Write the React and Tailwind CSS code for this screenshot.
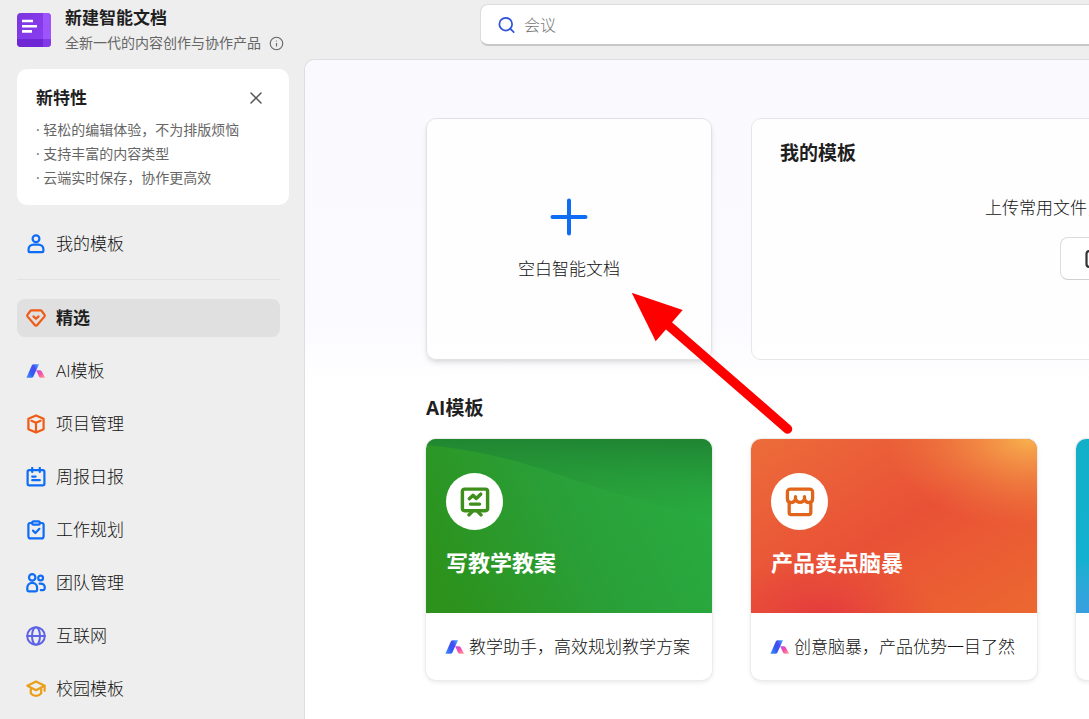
import { Search, X, Info } from 'lucide-react';

const FONT = "font-['Open_Sans','Noto_Sans_CJK_SC',sans-serif]";

function Stroke({ color, size = 20, width = 2.2, children }) {
  return (
    <svg className="shrink-0" width={size} height={size} viewBox="0 0 20 20" fill="none" stroke={color} strokeWidth={width} strokeLinecap="round" strokeLinejoin="round" aria-hidden="true">
      {children}
    </svg>
  );
}

function AiMark({ id }) {
  return (
    <svg className="shrink-0" width="20" height="20" viewBox="0 0 20 20" aria-hidden="true">
      <defs>
        <linearGradient id={`${id}-a`} x1="0" y1="0.8" x2="1" y2="0.2">
          <stop offset="0" stopColor="#3d8bff" />
          <stop offset="0.4" stopColor="#3457f2" />
          <stop offset="0.7" stopColor="#4a4cf0" />
          <stop offset="1" stopColor="#3fa0ff" />
        </linearGradient>
        <linearGradient id={`${id}-b`} x1="0" y1="0" x2="1" y2="1">
          <stop offset="0" stopColor="#b44df0" />
          <stop offset="0.5" stopColor="#f84fa8" />
          <stop offset="1" stopColor="#ffa9a0" />
        </linearGradient>
      </defs>
      <path d="M10.200 9.200H13.800Q15.200 9.200 15.800 10.400L19.200 16.800H15Q13.600 16.800 13 15.600Z" fill={`url(#${id}-b)`} />
      <path d="M5.800 4.400Q6.400 3.200 7.800 3.200H13L7.400 15.600Q6.800 16.800 5.400 16.800H.4Z" fill={`url(#${id}-a)`} />
    </svg>
  );
}

function DocLogo() {
  return (
    <svg className="shrink-0" width="34" height="34" viewBox="0 0 34 34" aria-hidden="true">
      <defs>
        <clipPath id="doc-clip"><rect width="34" height="34" rx="4" /></clipPath>
        <linearGradient id="doc-page" x1="0" y1="0" x2="1" y2="1">
          <stop offset="0" stopColor="#7a35de" />
          <stop offset="1" stopColor="#9040f4" />
        </linearGradient>
      </defs>
      <g clipPath="url(#doc-clip)">
        <rect width="34" height="34" fill="url(#doc-page)" />
        <rect x="26" width="8" height="34" fill="#9d55fb" />
        <rect y="26" width="26" height="8" fill="#6f26d4" />
        <path d="M26 26h8v8h-8z" fill="#8438e8" />
      </g>
      <path d="M5 8h11M5 13.200h15M5 18.400h10" stroke="#fff" strokeWidth="2.600" />
    </svg>
  );
}

const navItems = [
  {
    label: '精选',
    active: true,
    icon: (
      <Stroke color="#f05a14">
        <path d="M5.600 2.400h8.800a1.600 1.600 0 0 1 1.300.6l2.700 3.600a1.600 1.600 0 0 1 0 2L11.200 17a1.600 1.600 0 0 1-2.400 0L1.600 8.600a1.600 1.600 0 0 1 0-2L4.300 3a1.600 1.600 0 0 1 1.300-.6Z" />
        <path d="M7.400 8.400 10 10.800l2.600-2.400" />
      </Stroke>
    ),
  },
  { label: 'AI模板', icon: <AiMark id="nav" /> },
  {
    label: '项目管理',
    icon: (
      <Stroke color="#f05a14">
        <path d="M10 1.600 17.600 4.800v10.400L10 18.400 2.400 15.200V4.800Z" />
        <path d="M5.400 6.800 10 8.800l4.600-2M10 8.800v9.200" />
      </Stroke>
    ),
  },
  {
    label: '周报日报',
    icon: (
      <Stroke color="#0f6cf5">
        <rect x="1.600" y="3.200" width="16.800" height="15.200" rx="1.600" />
        <path d="M6.200 1v4M13.800 1v4M6.200 9.600h3.400M6.200 13.200h7.600" />
      </Stroke>
    ),
  },
  {
    label: '工作规划',
    icon: (
      <Stroke color="#0f6cf5">
        <path d="M6 3H4.200A1.800 1.800 0 0 0 2.400 4.800v11.800a1.800 1.800 0 0 0 1.800 1.800h11.600a1.800 1.800 0 0 0 1.800-1.800V4.800A1.800 1.800 0 0 0 15.800 3H14" />
        <rect x="6.200" y="1.400" width="7.600" height="3.200" rx="1.400" />
        <path d="m7 10.600 2.400 2.400 4-4.200" />
      </Stroke>
    ),
  },
  {
    label: '团队管理',
    icon: (
      <Stroke color="#0f6cf5">
        <circle cx="6.200" cy="4.400" r="3.200" />
        <circle cx="14.600" cy="5" r="2.400" />
        <path d="M1.300 17v-2.200a4.900 4.900 0 0 1 9.800 0V17a1.300 1.300 0 0 1-1.300 1.300H2.600A1.300 1.300 0 0 1 1.300 17Z" />
        <path d="M13.600 10.600c3.200-.4 5.200 1.400 5.200 4 0 1.800-.6 2.600-2 2.600h-2" />
      </Stroke>
    ),
  },
  {
    label: '互联网',
    icon: (
      <Stroke color="#5f63e6" width={2}>
        <circle cx="10" cy="10" r="8.800" />
        <ellipse cx="10" cy="10" rx="4" ry="8.800" />
        <path d="M1.200 10h17.600" />
      </Stroke>
    ),
  },
  {
    label: '校园模板',
    icon: (
      <Stroke color="#e99f1a">
        <path d="M10 2.400 1.400 6.800 10 11.200 18.600 6.800Z" />
        <path d="M4.800 10v4.400c2.600 3.400 7.800 3.400 10.400 0V10M18.600 7.200v4.600" />
      </Stroke>
    ),
  },
];

const aiCards = [
  {
    id: 'teach',
    title: '写教学教案',
    desc: '教学助手，高效规划教学方案',
    icon: (
      <Stroke color="#3f8f1c" size={30} width={2.3}>
        <rect x="1.600" y="1.400" width="16.800" height="14.400" rx="1.400" />
        <path d="M6.200 7.800 8.600 5.600l2.200 2 3-2.800M7 11.400h6" />
        <path d="M6 18.600 8 16.600M14 18.600l-2-2" />
      </Stroke>
    ),
  },
  {
    id: 'product',
    title: '产品卖点脑暴',
    desc: '创意脑暴，产品优势一目了然',
    icon: (
      <Stroke color="#e0641a" size={30} width={2.2}>
        <path d="M3.600 1.400h12.800a2 2 0 0 1 2 2v4.200c0 3.200-3.800 3.800-5.400.8-1.200 2.400-4.800 2.400-6 0-1.600 3-5.400 2.400-5.400-.8V3.400a2 2 0 0 1 2-2Z" />
        <path d="M7 6.400v2M13 6.400v2M2.800 10.400v6.800a1.200 1.200 0 0 0 1.200 1.200h12a1.200 1.200 0 0 0 1.200-1.200v-6.800" />
      </Stroke>
    ),
  },
  { id: 'next' },
];

const covers = {
  teach: (
    <svg className="absolute inset-0 h-full w-full" viewBox="0 0 286 174" preserveAspectRatio="none" aria-hidden="true">
      <defs>
        <linearGradient id="cover-green" x1="0" y1="0.65" x2="1" y2="0.35">
          <stop offset="0" stopColor="#2c921c" />
          <stop offset="0.5" stopColor="#2a9f38" />
          <stop offset="1" stopColor="#28ac40" />
        </linearGradient>
        <linearGradient id="cover-green-top" x1="0.5" y1="0" x2="0.42" y2="1">
          <stop offset="0" stopColor="#1f8432" stopOpacity="0.95" />
          <stop offset="1" stopColor="#28a03c" stopOpacity="0" />
        </linearGradient>
      </defs>
      <rect width="286" height="174" fill="url(#cover-green)" />
      <path d="M0 0H286V80Q215 62 150 42Q70 12 0 6Z" fill="url(#cover-green-top)" />
    </svg>
  ),
  product: (
    <svg className="absolute inset-0 h-full w-full" viewBox="0 0 286 174" preserveAspectRatio="none" aria-hidden="true">
      <defs>
        <linearGradient id="cover-orange" x1="0" y1="0" x2="1" y2="1">
          <stop offset="0" stopColor="#ec6c3a" />
          <stop offset="0.5" stopColor="#e95136" />
          <stop offset="1" stopColor="#ec6830" />
        </linearGradient>
        <radialGradient id="cover-yellow" cx="0.97" cy="0" r="0.5">
          <stop offset="0" stopColor="#f8b04e" />
          <stop offset="1" stopColor="#f08840" stopOpacity="0" />
        </radialGradient>
        <radialGradient id="cover-red" cx="0.25" cy="1.05" r="0.4">
          <stop offset="0" stopColor="#e4373f" />
          <stop offset="1" stopColor="#e4453c" stopOpacity="0" />
        </radialGradient>
      </defs>
      <rect width="286" height="174" fill="url(#cover-orange)" />
      <rect width="286" height="174" fill="url(#cover-yellow)" />
      <rect width="286" height="174" fill="url(#cover-red)" />
    </svg>
  ),
  next: <div className="absolute inset-0 bg-linear-to-b from-[#12b0c8] via-[#14b0d0] via-70% to-[#3a9fe0]" />,
};

function NavItem({ label, icon, active }) {
  return (
    <a
      href="#"
      className={`flex h-[38px] items-center gap-[10px] rounded-lg pl-[9px] text-[17px] ${active ? 'bg-[#e0e0e0] font-bold text-[#1f1f1f]' : 'font-light text-[#111]'}`}
    >
      {icon}
      <span>{label}</span>
    </a>
  );
}

function Sidebar() {
  return (
    <aside className="w-[304px] shrink-0 pt-[7px] pr-[15px] pl-[17px]">
      <div className="flex items-center gap-[14px]">
        <DocLogo />
        <div className="flex flex-col gap-1 whitespace-nowrap">
          <h1 className="text-[17px] leading-[22px] font-bold text-[#1f1f1f]">新建智能文档</h1>
          <p className="flex items-center gap-2 text-sm leading-5 text-[#666]">
            全新一代的内容创作与协作产品
            <Info size={15} strokeWidth={1.8} />
          </p>
        </div>
      </div>

      <section className="mt-4 rounded-[10px] bg-white px-[19px] pt-[17px] pb-[15px]">
        <div className="flex h-6 items-center justify-between">
          <h2 className="text-[17px] font-bold text-[#1f1f1f]">新特性</h2>
          <button aria-label="关闭" className="flex h-6 items-center px-1 text-[#555]">
            <X size={20} strokeWidth={1.8} />
          </button>
        </div>
        <ul className="mt-2 text-sm leading-6 text-[#666]">
          <li>· 轻松的编辑体验，不为排版烦恼</li>
          <li>· 支持丰富的内容类型</li>
          <li>· 云端实时保存，协作更高效</li>
        </ul>
      </section>

      <nav className="mt-5 pr-[9px]">
        <NavItem
          label="我的模板"
          icon={
            <Stroke color="#0f6cf5">
              <circle cx="10" cy="4.800" r="3.400" />
              <path d="M2.600 17v-1.800c0-2.800 2.400-4.600 5-4.600h4.800c2.600 0 5 1.800 5 4.600V17a1.200 1.200 0 0 1-1.200 1.200H3.800A1.200 1.200 0 0 1 2.600 17Z" />
            </Stroke>
          }
        />
        <hr className="mt-4 mb-[19px] border-[#e2e2e2]" />
        <div className="flex flex-col gap-[15px]">
          {navItems.map(item => <NavItem key={item.label} {...item} />)}
        </div>
      </nav>
    </aside>
  );
}

function AiCard({ id, title, desc, icon }) {
  return (
    <article className="overflow-hidden rounded-[10px] bg-white shadow-[0_0_0_1px_#ececec,0_2px_5px_rgba(0,0,0,0.1)]">
      <div className="relative h-[174px]">
        {covers[id]}
        {title && (
          <div className="relative px-5 pt-[34px]">
            <div className="flex h-[57px] w-[57px] items-center justify-center rounded-full bg-white">{icon}</div>
            <h3 className="mt-4 text-[22px] leading-8 font-bold text-white">{title}</h3>
          </div>
        )}
      </div>
      <div className="flex h-[67px] items-center gap-1 pl-[19px] text-[17px] font-light whitespace-nowrap text-[#111]">
        {desc && <AiMark id={id} />}
        {desc}
      </div>
    </article>
  );
}

export default function App() {
  return (
    <div className={`relative flex h-screen overflow-hidden bg-[#eee] ${FONT}`}>
      <Sidebar />

      <div className="flex min-w-0 flex-1 flex-col">
        <header className="flex h-[59px] shrink-0 pt-1 pl-[176px]">
          <label className="flex h-[42px] flex-1 items-center gap-2 rounded-l-lg border border-r-0 border-b-2 border-[#dcdcdc] border-b-[#c8c8c8] bg-white pl-4">
            <Search size={20} color="#2f54d8" strokeWidth={2.2} />
            <input aria-label="搜索" placeholder="会议" className="w-full min-w-0 bg-transparent text-base font-light outline-none placeholder:text-[#777]" />
          </label>
        </header>

        <main className="flex-1 overflow-hidden rounded-tl-[10px] border-t border-l border-[#dedee2] bg-linear-to-b from-[#f9f9fe] via-[#fbfbff] via-40% to-white to-50% pt-[58px] pl-[121px]">
          <div className="grid auto-cols-[286px] grid-flow-col gap-[39px]">
            <button className="flex h-[242px] flex-col items-center rounded-[10px] border border-[#e2e2e6] bg-white/80 pt-[79px] shadow-md">
              <svg width="38" height="38" viewBox="0 0 38 38" stroke="#0f6cf5" strokeWidth="4" strokeLinecap="round" aria-hidden="true">
                <path d="M19 2.500v33M2.500 19h33" />
              </svg>
              <span className="mt-[19px] text-[17px] leading-7 font-light text-[#111]">空白智能文档</span>
            </button>
            <section className="col-span-2 h-[242px] rounded-[10px] border border-[#e6e6ea] bg-white/80 pt-5 pl-7 whitespace-nowrap">
              <h2 className="text-[19px] leading-7 font-bold text-[#1f1f1f]">我的模板</h2>
              <p className="mt-[27px] pl-[205px] text-[17px] leading-7 font-light text-[#111]">上传常用文件，</p>
              <button aria-label="上传" className="mt-[15px] ml-[280px] flex h-[43px] w-40 items-center rounded-lg border border-[#dcdce0] border-b-[#cfcfd4] bg-white pl-6">
                <Stroke color="#333">
                  <rect x="1.500" y="2" width="17" height="16" rx="3" />
                </Stroke>
              </button>
            </section>
          </div>

          <h2 className="mt-[34px] text-[19px] leading-7 font-bold text-[#1f1f1f]">AI模板</h2>
          <div className="mt-[17px] grid auto-cols-[286px] grid-flow-col gap-[39px]">
            {aiCards.map(card => <AiCard key={card.id} {...card} />)}
          </div>
        </main>
      </div>

      {/* Pointer to the blank document card */}
      <svg className="pointer-events-none absolute top-[292px] left-[631px]" width="164" height="146" viewBox="631 292 164 146" aria-hidden="true">
        <path d="M668 325 787.500 429" stroke="#f00" strokeWidth="9.500" strokeLinecap="round" />
        <path d="M631.700 292.700 682.700 310 655.700 341.300Z" fill="#f00" />
      </svg>
    </div>
  );
}
